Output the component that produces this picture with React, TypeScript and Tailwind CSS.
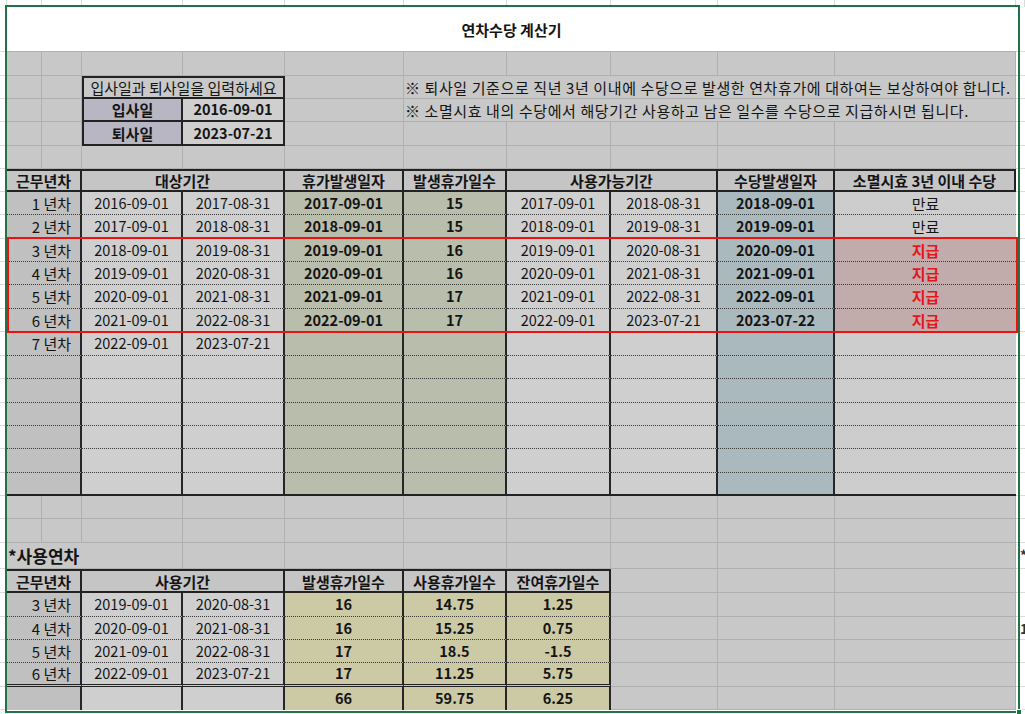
import type { ReactNode } from "react";

// Excel-style 연차수당 계산기 sheet, 1025 × 714
const COLS =
  "grid grid-cols-[7px_35px_40px_101px_102px_119px_103px_104px_107px_117px_181px_9px]";
const EDGE = "bg-white border-b border-[#dadada]";
const GRID = "bg-[#c8c8c8] border-r border-b border-[#b0b0b0]";

const SPAN: Record<number, string> = {
  1: "col-span-1",
  2: "col-span-2",
  3: "col-span-3",
  5: "col-span-5",
  10: "col-span-10",
};

function Cell({
  span = 1,
  className = "",
  children,
}: {
  span?: number;
  className?: string;
  children?: ReactNode;
}) {
  return (
    <div
      className={`${SPAN[span]} flex min-w-0 items-center overflow-hidden whitespace-nowrap leading-none ${className}`}
    >
      {children}
    </div>
  );
}

function Row({ h, children, edge }: { h: string; children: ReactNode; edge?: ReactNode }) {
  return (
    <div className={`${COLS} ${h}`}>
      <div className={EDGE} />
      {children}
      <div className={`${EDGE} flex items-center overflow-hidden`}>{edge}</div>
    </div>
  );
}

function Gray({ n = 1 }: { n?: number }) {
  return (
    <>
      {Array.from({ length: n }, (_, i) => (
        <Cell key={i} className={GRID} />
      ))}
    </>
  );
}

const MAIN = [
  ["2016-09-01", "2017-08-31", "2017-09-01", "15", "2017-09-01", "2018-08-31", "2018-09-01", "만료"],
  ["2017-09-01", "2018-08-31", "2018-09-01", "15", "2018-09-01", "2019-08-31", "2019-09-01", "만료"],
  ["2018-09-01", "2019-08-31", "2019-09-01", "16", "2019-09-01", "2020-08-31", "2020-09-01", "지급"],
  ["2019-09-01", "2020-08-31", "2020-09-01", "16", "2020-09-01", "2021-08-31", "2021-09-01", "지급"],
  ["2020-09-01", "2021-08-31", "2021-09-01", "17", "2021-09-01", "2022-08-31", "2022-09-01", "지급"],
  ["2021-09-01", "2022-08-31", "2022-09-01", "17", "2022-09-01", "2023-07-21", "2023-07-22", "지급"],
  ["2022-09-01", "2023-07-21", "", "", "", "", "", ""],
];
const MAIN_H = [
  "h-[23px]", "h-[24px]", "h-[23px]", "h-[23px]", "h-[24px]", "h-[23px]", "h-[24px]",
  "h-[23px]", "h-[24px]", "h-[23px]", "h-[23px]", "h-[24px]", "h-[23px]",
];

const USED = [
  ["3", "2019-09-01", "2020-08-31", "16", "14.75", "1.25"],
  ["4", "2020-09-01", "2021-08-31", "16", "15.25", "0.75"],
  ["5", "2021-09-01", "2022-08-31", "17", "18.5", "-1.5"],
  ["6", "2022-09-01", "2023-07-21", "17", "11.25", "5.75"],
];
const USED_H = ["h-[24px]", "h-[23px]", "h-[23px]", "h-[24px]"];

const HEAD = "bg-[#c5c5c5] border-t-2 border-b-2 border-r-2 border-[#222] justify-center font-bold";
const VR = "border-r-2 border-r-[#262626]";
const DOT = "border-b border-b-[#3a3a3a] [border-bottom-style:dotted]";
const NUM = "justify-center text-[14.5px]";

export default function App() {
  return (
    <div className="relative h-[714px] w-[1025px] overflow-hidden bg-white font-['Noto_Sans_CJK_KR',sans-serif] text-[15px] text-[#141414]">
      {/* top strip above the sheet */}
      <div className={`${COLS} h-[7px]`}>
        {Array.from({ length: 12 }, (_, i) => (
          <div key={i} className="border-r border-[#dadada] bg-white" />
        ))}
      </div>

      {/* title */}
      <Row h="h-[45px]">
        <Cell span={10} className="justify-center border-b border-[#b0b0b0] bg-white font-bold">
          연차수당 계산기
        </Cell>
      </Row>

      <Row h="h-[24px]">
        <Gray n={10} />
      </Row>

      {/* input box + notes */}
      <Row h="h-[23px]">
        <Gray n={2} />
        <Cell span={2} className="justify-center border-2 border-[#222] bg-[#c9c9c9]">
          입사일과 퇴사일을 입력하세요
        </Cell>
        <Gray />
        <Cell span={5} className={`${GRID} pl-[1px] tracking-[0.6px]`}>
          ※ 퇴사일 기준으로 직년 3년 이내에 수당으로 발생한 연차휴가에 대하여는 보상하여야 합니다.
        </Cell>
      </Row>
      <Row h="h-[23px]">
        <Gray n={2} />
        <Cell className="justify-center border-b-2 border-l-2 border-r-2 border-[#222] bg-[#b9b6c3] font-bold">
          입사일
        </Cell>
        <Cell className={`${NUM} border-b-2 border-r-2 border-[#222] bg-[#cfcfcf] font-bold`}>
          2016-09-01
        </Cell>
        <Gray />
        <Cell span={5} className={`${GRID} pl-[1px] tracking-[0.6px]`}>
          ※ 소멸시효 내의 수당에서 해당기간 사용하고 남은 일수를 수당으로 지급하시면 됩니다.
        </Cell>
      </Row>
      <Row h="h-[24px]">
        <Gray n={2} />
        <Cell className="justify-center border-b-2 border-l-2 border-r-2 border-[#222] bg-[#b9b6c3] font-bold">
          퇴사일
        </Cell>
        <Cell className={`${NUM} border-b-2 border-r-2 border-[#222] bg-[#cfcfcf] font-bold`}>
          2023-07-21
        </Cell>
        <Gray n={6} />
      </Row>
      <Row h="h-[23px]">
        <Gray n={10} />
      </Row>

      {/* main table header */}
      <Row h="h-[23px]">
        <Cell span={2} className={HEAD}>근무년차</Cell>
        <Cell span={2} className={HEAD}>대상기간</Cell>
        <Cell className={HEAD}>휴가발생일자</Cell>
        <Cell className={HEAD}>발생휴가일수</Cell>
        <Cell span={2} className={HEAD}>사용가능기간</Cell>
        <Cell className={HEAD}>수당발생일자</Cell>
        <Cell className={HEAD}>소멸시효 3년 이내 수당</Cell>
      </Row>

      {MAIN_H.map((h, i) => {
        const r = MAIN[i];
        const b = i === MAIN_H.length - 1 ? "border-b-2 border-b-[#222]" : DOT;
        const pay = r?.[7] === "지급";
        return (
          <Row key={i} h={h}>
            <Cell span={2} className={`${b} ${VR} justify-end bg-[#c0c0c0] pr-[9px]`}>
              {r ? `${i + 1} 년차` : ""}
            </Cell>
            <Cell className={`${b} ${VR} ${NUM} bg-[#cfcfcf]`}>{r?.[0]}</Cell>
            <Cell className={`${b} ${VR} ${NUM} bg-[#cfcfcf]`}>{r?.[1]}</Cell>
            <Cell className={`${b} ${VR} ${NUM} bg-[#b9bdab] font-bold`}>{r?.[2]}</Cell>
            <Cell className={`${b} ${VR} ${NUM} bg-[#b9bdab] font-bold`}>{r?.[3]}</Cell>
            <Cell className={`${b} ${VR} ${NUM} bg-[#cfcfcf]`}>{r?.[4]}</Cell>
            <Cell className={`${b} ${VR} ${NUM} bg-[#cfcfcf]`}>{r?.[5]}</Cell>
            <Cell className={`${b} ${VR} ${NUM} bg-[#a9b9be] font-bold`}>{r?.[6]}</Cell>
            <Cell
              className={`${b} justify-center ${pay ? "bg-[#c2abab] font-bold text-[#e3161b]" : "bg-[#cdcdcd]"}`}
            >
              {r?.[7]}
            </Cell>
          </Row>
        );
      })}

      <Row h="h-[23px]">
        <Gray n={10} />
      </Row>
      <Row h="h-[24px]">
        <Gray n={10} />
      </Row>

      {/* used leave */}
      <Row h="h-[26px]" edge={<span className="pl-[4px] text-[14px] font-bold text-[#333]">*</span>}>
        <Cell span={3} className={`${GRID} pl-[1px] text-[17px] font-bold`}>
          *사용연차
        </Cell>
        <Gray n={7} />
      </Row>
      <Row h="h-[24px]">
        <Cell span={2} className={HEAD}>근무년차</Cell>
        <Cell span={2} className={HEAD}>사용기간</Cell>
        <Cell className={HEAD}>발생휴가일수</Cell>
        <Cell className={HEAD}>사용휴가일수</Cell>
        <Cell className={HEAD}>잔여휴가일수</Cell>
        <Gray n={3} />
      </Row>
      {USED.map((r, i) => {
        const b =
          i === USED.length - 1
            ? "border-b-[3px] border-b-[#222] [border-bottom-style:double]"
            : DOT;
        return (
          <Row
            key={r[0]}
            h={USED_H[i]}
            edge={i === 1 ? <span className="pl-[4px] text-[14px] font-bold text-[#333]">1</span> : undefined}
          >
            <Cell span={2} className={`${b} ${VR} justify-end bg-[#c0c0c0] pr-[9px]`}>
              {r[0]} 년차
            </Cell>
            <Cell className={`${b} ${VR} ${NUM} bg-[#cfcfcf]`}>{r[1]}</Cell>
            <Cell className={`${b} ${VR} ${NUM} bg-[#cfcfcf]`}>{r[2]}</Cell>
            <Cell className={`${b} ${VR} ${NUM} bg-[#cccaa5] font-bold`}>{r[3]}</Cell>
            <Cell className={`${b} ${VR} ${NUM} bg-[#cccaa5] font-bold`}>{r[4]}</Cell>
            <Cell className={`${b} ${VR} ${NUM} bg-[#cccaa5] font-bold`}>{r[5]}</Cell>
            <Gray n={3} />
          </Row>
        );
      })}
      <Row h="h-[23px]">
        <Cell span={2} className={`${VR} bg-[#c0c0c0]`} />
        <Cell className={`${VR} bg-[#cfcfcf]`} />
        <Cell className={`${VR} bg-[#cfcfcf]`} />
        <Cell className={`${VR} ${NUM} bg-[#cccaa5] font-bold`}>66</Cell>
        <Cell className={`${VR} ${NUM} bg-[#cccaa5] font-bold`}>59.75</Cell>
        <Cell className={`${VR} ${NUM} bg-[#cccaa5] font-bold`}>6.25</Cell>
        <Gray n={3} />
      </Row>
      <div className="h-[4px] bg-white" />

      {/* red highlight box */}
      <div className="pointer-events-none absolute left-[7px] top-[237px] h-[96px] w-[1011px] border-2 border-[#f01010]" />
      {/* excel selection */}
      <div className="pointer-events-none absolute left-[5px] top-[5px] h-[708px] w-[1015px] border-2 border-[#217346]" />
      <div className="absolute left-[1016px] top-[709px] h-[6px] w-[6px] border border-white bg-[#217346]" />
    </div>
  );
}
